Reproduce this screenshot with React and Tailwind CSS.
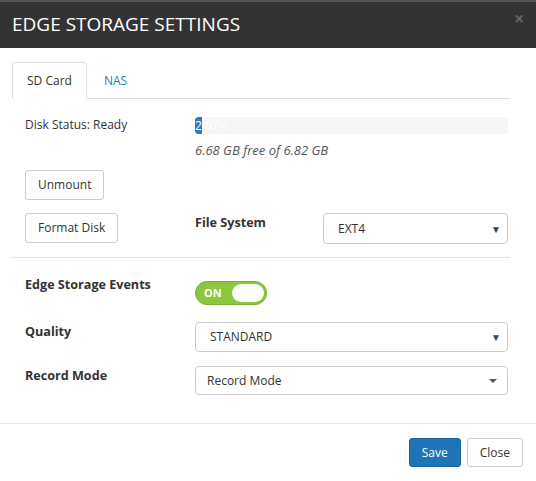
export default function App() {
  return (
    <div className="w-[536px] h-[481px] bg-white text-[#333] font-['Open_Sans',sans-serif] text-[12px] leading-[18px] flex flex-col">
      <header className="h-[48px] shrink-0 bg-[#333] border-t-2 border-[#555] flex items-center justify-between pl-[12px] pr-[12px]">
        <h1 className="text-white text-[19px] leading-none -mt-[2px]">EDGE STORAGE SETTINGS</h1>
        <span className="text-[#666] text-[17px] font-bold leading-none -mt-[14px]">×</span>
      </header>

      <div className="flex-1 px-[12px] pt-[14px]">
        <ul className="flex border-b border-[#ddd] mr-[14px] h-[37px]">
          <li className="h-[37px] px-[14px] flex items-center border border-[#ddd] border-b-white rounded-t-[4px] bg-white -mb-px">
            SD Card
          </li>
          <li className="h-[37px] px-[17px] flex items-center text-[#337ab7]">NAS</li>
        </ul>

        <div className="pl-[13px] pr-[2px] pt-[18px] mr-[14px]">
          <div className="flex">
            <div className="w-[170px] -mt-[1px]">Disk Status: Ready</div>
            <div className="flex-1">
              <div className="h-[17px] bg-[#f5f5f5] rounded-[3px] relative overflow-hidden">
                <div className="h-full w-[7px] bg-[#337ab7] rounded-l-[3px]"></div>
                <span className="absolute left-0 top-0 text-white text-[12px] leading-[17px]">2.07%</span>
              </div>
              <div className="italic text-[#555] text-[13px] mt-[7px]">6.68 GB free of 6.82 GB</div>
            </div>
          </div>

          <button className="mt-[11px] h-[30px] px-[12px] border border-[#ccc] rounded-[3px] bg-white flex items-center">
            Unmount
          </button>

          <div className="flex mt-[13px] items-start">
            <div className="w-[170px]">
              <button className="h-[30px] px-[12px] border border-[#ccc] rounded-[3px] bg-white flex items-center">
                Format Disk
              </button>
            </div>
            <div className="w-[128px] font-bold text-[12.6px] pt-[1px]">File System</div>
            <div className="flex-1 h-[31px] border border-[#ccc] rounded-[4px] flex items-center justify-between pl-[14px] pr-[6px]">
              <span>EXT4</span>
              <span className="text-[10px] text-[#444]">▼</span>
            </div>
          </div>
        </div>

        <div className="border-t border-[#e5e5e5] mt-[13px] mr-[14px] -ml-[1px]"></div>

        <div className="pl-[13px] pr-[2px] pt-[18px] mr-[14px]">
          <div className="flex items-start">
            <div className="w-[170px] font-bold text-[12.6px]">Edge Storage Events</div>
            <div className="mt-[5px] w-[72px] h-[24px] rounded-full bg-[#8dc63f] border border-[#7ab033] flex items-center justify-between pl-[8px] pr-[2px]">
              <span className="text-white text-[11px] font-bold">ON</span>
              <span className="w-[32px] h-[18px] rounded-full bg-[#fcfff5]"></span>
            </div>
          </div>

          <div className="flex items-start mt-[17px]">
            <div className="w-[170px] font-bold text-[12.6px] pt-[1px]">Quality</div>
            <div className="flex-1 h-[30px] border border-[#ccc] rounded-[4px] flex items-center justify-between pl-[14px] pr-[6px]">
              <span>STANDARD</span>
              <span className="text-[10px] text-[#444]">▼</span>
            </div>
          </div>

          <div className="flex items-start mt-[14px]">
            <div className="w-[170px] font-bold text-[12.6px] pt-[1px]">Record Mode</div>
            <div className="flex-1 h-[29px] border border-[#ccc] rounded-[4px] flex items-center justify-between pl-[11px] pr-[10px]">
              <span>Record Mode</span>
              <span className="w-0 h-0 border-l-[4px] border-r-[4px] border-t-[4px] border-l-transparent border-r-transparent border-t-[#555]"></span>
            </div>
          </div>
        </div>
      </div>

      <footer className="h-[58px] shrink-0 border-t border-[#e5e5e5] flex items-start justify-end gap-[6px] pr-[13px] pt-[14px]">
        <button className="h-[29px] px-[12px] rounded-[3px] bg-[#1f73b7] text-white border border-[#1a66a3]">Save</button>
        <button className="h-[29px] px-[12px] rounded-[3px] bg-white border border-[#ccc]">Close</button>
      </footer>
    </div>
  );
}
